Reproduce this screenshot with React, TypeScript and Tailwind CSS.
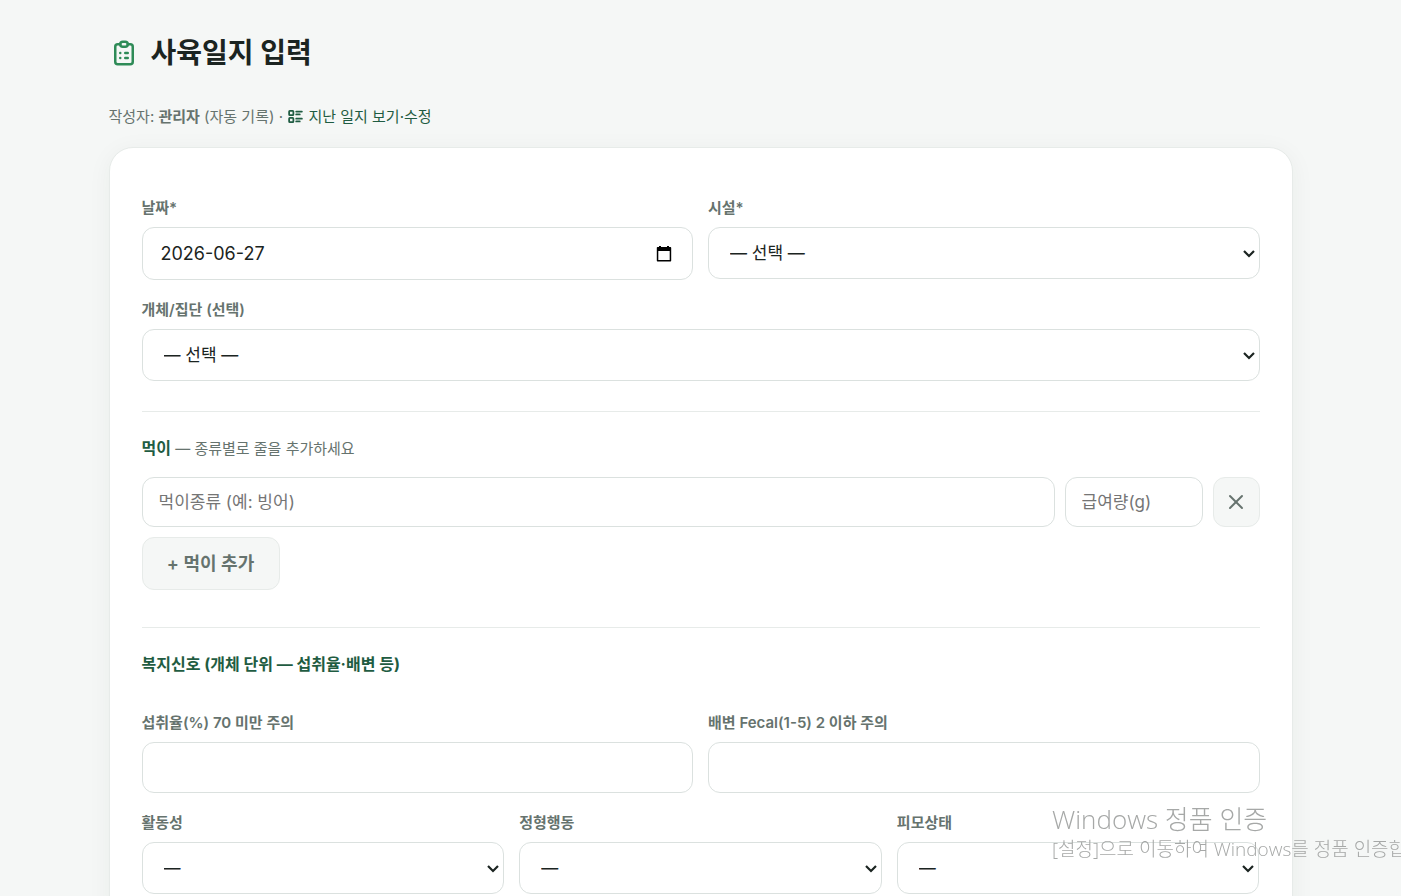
import { useState } from "react";
import type { ReactNode } from "react";
import { TbClipboardList, TbListDetails, TbX } from "react-icons/tb";

const control =
  "w-full rounded-xl border border-[#dbe1df] bg-white leading-6 text-[#1b2421] outline-none focus:border-[#2e8b57]";

function Field({ id, label, children }: { id: string; label: string; children: ReactNode }) {
  return (
    <div className="flex min-w-0 flex-col gap-2">
      <label htmlFor={id} className="text-[15px] font-semibold leading-[22px] text-[#66736e]">
        {label}
      </label>
      {children}
    </div>
  );
}

function SelectField({ id, label, empty }: { id: string; label: string; empty: string }) {
  return (
    <Field id={id} label={label}>
      <div className="relative">
        <select id={id} className={`${control} block h-[52px] appearance-none px-[21px] text-[17px]`}>
          <option>{empty}</option>
        </select>
        <svg
          width="12"
          height="8"
          viewBox="0 0 12 8"
          aria-hidden="true"
          className="pointer-events-none absolute right-[5px] top-[23px]"
        >
          <path d="M1 1l5 5 5-5" fill="none" stroke="#1b2421" strokeWidth="2.200" />
        </svg>
      </div>
    </Field>
  );
}

function CalendarIcon() {
  return (
    <svg width="16" height="18" viewBox="0 0 16 18" aria-hidden="true">
      <path
        fill="#000"
        d="M3 1h2v1h6V1h2v1h1.2c.6 0 1 .4 1 1v12.500c0 .6-.4 1-1 1H1.800c-.6 0-1-.4-1-1V3c0-.6.4-1 1-1H3zM2.300 6v9h11.400V6z"
      />
    </svg>
  );
}

export default function App() {
  const [date, setDate] = useState("2026-06-27");

  return (
    <div className="min-h-screen bg-[#f5f7f6] font-['Inter','Noto_Sans_CJK_KR',sans-serif] text-[#1b2421]">
      <main className="mx-auto max-w-[1280px] px-12 pt-[33px]">
        <h1 className="flex items-center gap-3 text-[28px] font-bold leading-10">
          <TbClipboardList className="size-[30px] text-[#2e8b57]" />
          사육일지 입력
        </h1>

        <p className="mt-8 text-[15px] leading-6 text-[#66736e]">
          작성자: <b>관리자</b> (자동 기록) ·{" "}
          <a href="#logs" className="text-[#1f5c42]">
            <TbListDetails strokeWidth={2.5} className="inline size-[17px] align-[-3px]" /> 지난 일지 보기·수정
          </a>
        </p>

        <form className="mt-[18px] rounded-3xl border border-[#e7ebe9] bg-white px-8 pb-8 pt-[49px] shadow-[0_4px_24px_rgba(20,50,40,0.05)]">
          <div className="grid grid-cols-2 gap-x-[15px] gap-y-[19px]">
            <Field id="date" label="날짜*">
              <div className={`${control} flex h-[53px] items-center pl-[18px] pr-5 text-[18px]`}>
                <input
                  id="date"
                  type="text"
                  value={date}
                  onChange={(e) => setDate(e.target.value)}
                  className="min-w-0 flex-1 bg-transparent outline-none"
                />
                <button type="button" aria-label="달력">
                  <CalendarIcon />
                </button>
              </div>
            </Field>
            <SelectField id="facility" label="시설*" empty="— 선택 —" />
            <div className="col-span-2">
              <SelectField id="animal" label="개체/집단 (선택)" empty="— 선택 —" />
            </div>
          </div>

          <section className="mt-[30px] border-t border-[#e7ebe9] pt-6">
            <h2 className="text-[15px] font-normal leading-6 text-[#66736e]">
              <b className="text-[16px] text-[#1f5c42]">먹이</b> — 종류별로 줄을 추가하세요
            </h2>
            <div className="mt-4 flex gap-[10px]">
              <input
                aria-label="먹이종류"
                placeholder="먹이종류 (예: 빙어)"
                className={`${control} h-[50px] min-w-0 flex-1 px-4 text-[17px] placeholder:text-[#757575]`}
              />
              <div className="w-[138px]">
                <input
                  aria-label="급여량"
                  placeholder="급여량(g)"
                  className={`${control} h-[50px] px-4 text-[17px] placeholder:text-[#757575]`}
                />
              </div>
              <button
                type="button"
                aria-label="삭제"
                className="flex h-[50px] w-[47px] items-center justify-center rounded-xl border border-[#e7ebe9] bg-[#f5f7f6] text-[#66736e]"
              >
                <TbX className="size-6" />
              </button>
            </div>
            <button
              type="button"
              className="mt-[10px] h-[53px] w-[138px] rounded-xl border border-[#e7ebe9] bg-[#f5f7f6] text-[18px] font-semibold text-[#66736e]"
            >
              + 먹이 추가
            </button>
          </section>

          <section className="mt-[37px] border-t border-[#e7ebe9] pt-6">
            <h2 className="text-[16px] font-bold leading-6 text-[#1f5c42]">
              복지신호 (개체 단위 — 섭취율·배변 등)
            </h2>
            <div className="mt-9 grid grid-cols-2 gap-[15px]">
              <Field id="intake" label="섭취율(%) 70 미만 주의">
                <input id="intake" className={`${control} h-[51px] px-4 text-[17px]`} />
              </Field>
              <Field id="fecal" label="배변 Fecal(1-5) 2 이하 주의">
                <input id="fecal" className={`${control} h-[51px] px-4 text-[17px]`} />
              </Field>
            </div>
            <div className="mt-[19px] grid grid-cols-3 gap-[15px]">
              <SelectField id="activity" label="활동성" empty="—" />
              <SelectField id="stereotypy" label="정형행동" empty="—" />
              <SelectField id="coat" label="피모상태" empty="—" />
            </div>
          </section>
        </form>
      </main>

      <div className="pointer-events-none fixed bottom-[33px] left-[1052px] whitespace-nowrap font-['Open_Sans','Noto_Sans_CJK_KR',sans-serif] font-light text-[#a6a8a7]">
        <p className="text-[26px] leading-8">Windows 정품 인증</p>
        <p className="text-[19px] leading-7">[설정]으로 이동하여 Windows를 정품 인증합니다.</p>
      </div>
    </div>
  );
}
